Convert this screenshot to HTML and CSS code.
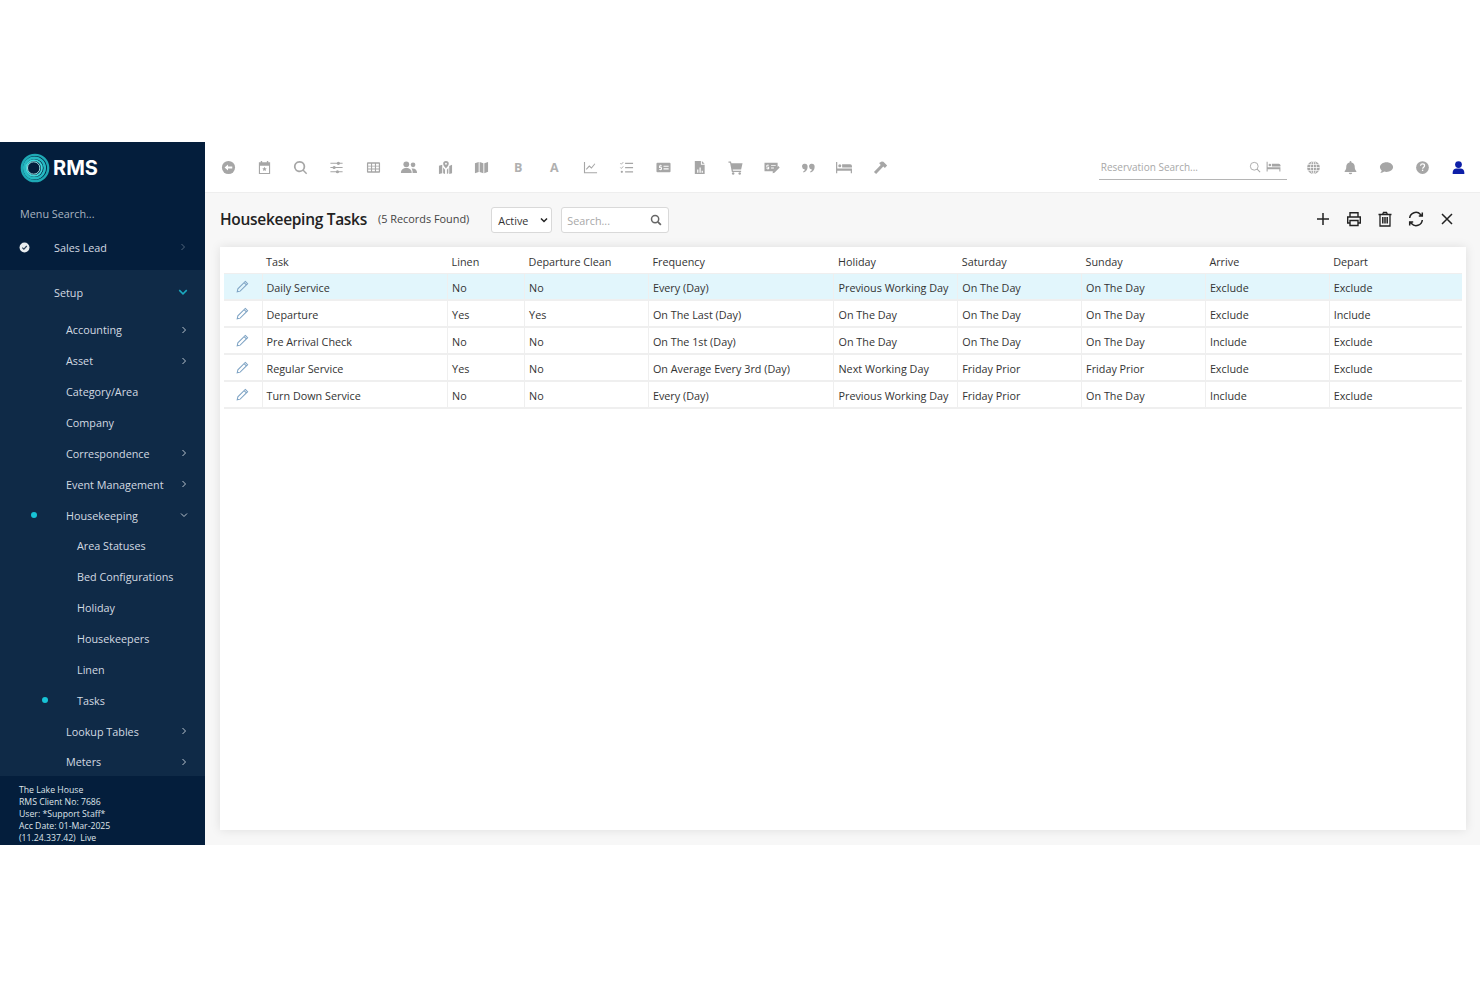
FILE: index.html
```html
<!DOCTYPE html>
<html lang="en">
	<head>
		<meta charset="UTF-8" />
		<title>Housekeeping Tasks</title>
		<link rel="stylesheet" href="styles.css">
	</head>
	<body>
		<div class="app">
			<aside class="sidebar">
				<div class="logo">
					<svg class="logo-mark" viewBox="0 0 32 32" fill="none">
						<circle cx="16" cy="16" r="14" stroke="#1fa9b5" stroke-width="2.6"/>
						<circle cx="15.5" cy="16" r="11" stroke="#25b9c2" stroke-width="2.6"/>
						<circle cx="15" cy="16" r="8.4" stroke="#3fd6da" stroke-width="2"/>
						<circle cx="14.600" cy="16" r="6.600" stroke="#a6eef0" stroke-width="1"/>
					</svg>
					<span class="logo-text">RMS</span>
				</div>
				<div class="menu-search">Menu Search...</div>
				<div class="menu-top">
					<svg class="check" viewBox="0 0 12 12"><circle cx="6" cy="6" r="5.400" fill="#e9edf0"/><path d="M3.600 6.200l1.700 1.600 3.200-3.400" fill="none" stroke="#2b3f55" stroke-width="1.300"/></svg>
					<span>Sales Lead</span>
					<svg class="chev dim" viewBox="0 0 8 8"><path d="M2.500 1l3 3-3 3" fill="none" stroke="currentColor" stroke-width="1"/></svg>
				</div>
				<nav class="menu">
					<div class="menu-setup">
						<span>Setup</span>
						<svg class="chev teal" viewBox="0 0 8 8"><path d="M1 2.500l3 3 3-3" fill="none" stroke="currentColor" stroke-width="1.200"/></svg>
					</div>
					<div class="item">Accounting<svg class="chev" viewBox="0 0 8 8"><path d="M2.500 1l3 3-3 3" fill="none" stroke="currentColor" stroke-width="1"/></svg></div>
					<div class="item">Asset<svg class="chev" viewBox="0 0 8 8"><path d="M2.500 1l3 3-3 3" fill="none" stroke="currentColor" stroke-width="1"/></svg></div>
					<div class="item">Category/Area</div>
					<div class="item">Company</div>
					<div class="item">Correspondence<svg class="chev" viewBox="0 0 8 8"><path d="M2.500 1l3 3-3 3" fill="none" stroke="currentColor" stroke-width="1"/></svg></div>
					<div class="item">Event Management<svg class="chev" viewBox="0 0 8 8"><path d="M2.500 1l3 3-3 3" fill="none" stroke="currentColor" stroke-width="1"/></svg></div>
					<div class="item">
						<i class="dot dot-l1"></i>Housekeeping<svg class="chev" viewBox="0 0 8 8"><path d="M1 2.500l3 3 3-3" fill="none" stroke="currentColor" stroke-width="1"/></svg>
					</div>
					<div class="item sub">Area Statuses</div>
					<div class="item sub">Bed Configurations</div>
					<div class="item sub">Holiday</div>
					<div class="item sub">Housekeepers</div>
					<div class="item sub">Linen</div>
					<div class="item sub"><i class="dot dot-l2"></i>Tasks</div>
					<div class="item">Lookup Tables<svg class="chev" viewBox="0 0 8 8"><path d="M2.500 1l3 3-3 3" fill="none" stroke="currentColor" stroke-width="1"/></svg></div>
					<div class="item">Meters<svg class="chev" viewBox="0 0 8 8"><path d="M2.500 1l3 3-3 3" fill="none" stroke="currentColor" stroke-width="1"/></svg></div>
				</nav>
				<div class="site-info">
					<div>The Lake House</div>
					<div>RMS Client No: 7686</div>
					<div>User: *Support Staff*</div>
					<div>Acc Date: 01-Mar-2025</div>
					<div>(11.24.337.42)&nbsp; Live</div>
				</div>
			</aside>
			<main class="main">
				<header class="topbar">
					<div class="tools">
						<span class="tool"><svg viewBox="0 0 16 16"><circle cx="8" cy="8" r="7"/><path d="M3.800 8l3.700-3.200v2.200H12v2H7.500v2.200z" fill="#fff"/></svg></span>
						<span class="tool"><svg viewBox="0 0 16 16"><path fill-rule="evenodd" d="M4 1h1.500v1.500h5V1H12v1.500h2V15H2V2.500h2zM3.200 6v7.800h9.600V6z"/><path d="M8 7.300l.8 1.500 1.600.2-1.200 1.100.3 1.600L8 11l-1.500.7.300-1.600L5.600 9l1.600-.2z"/></svg></span>
						<span class="tool"><svg viewBox="0 0 16 16"><path fill-rule="evenodd" d="M7 1a6 6 0 0 1 4.700 9.700l3.400 3.400-1.100 1.100-3.400-3.400A6 6 0 1 1 7 1zm0 1.800a4.200 4.200 0 1 0 0 8.400 4.200 4.200 0 0 0 0-8.400z"/></svg></span>
						<span class="tool"><svg viewBox="0 0 16 16"><path d="M1.500 3h13v1h-13zM1.500 7.500h13v1h-13zM1.500 12h13v1h-13z"/><circle cx="10" cy="3.500" r="1.700"/><circle cx="5.500" cy="8" r="1.700"/><circle cx="9" cy="12.500" r="1.700"/></svg></span>
						<span class="tool"><svg viewBox="0 0 16 16"><path fill-rule="evenodd" d="M2 2.500h12a1 1 0 0 1 1 1v9a1 1 0 0 1-1 1H2a1 1 0 0 1-1-1v-9a1 1 0 0 1 1-1zM2.300 4v2h3V4zm4.200 0v2h3V4zm4.200 0v2h3V4zM2.300 7v2h3V7zm4.200 0v2h3V7zm4.200 0v2h3V7zM2.300 10v2h3v-2zm4.200 0v2h3v-2zm4.200 0v2h3v-2z"/></svg></span>
						<span class="tool wide"><svg viewBox="0 0 20 16"><circle cx="7" cy="4.500" r="3.200"/><circle cx="14.500" cy="5" r="2.600"/><path d="M1 14c0-3.600 2.500-5.500 6-5.500s6 1.900 6 5.500z"/><path d="M14 14h5c0-3-1.700-5-4.800-5-.5 0-1 .1-1.400.2 1 1.200 1.200 3 1.200 4.800z"/></svg></span>
						<span class="tool"><svg viewBox="0 0 16 16"><path fill-rule="evenodd" d="M8.500 1a3 3 0 0 1 3 3c0 1.600-1.700 3.500-3 5-1.300-1.500-3-3.400-3-5a3 3 0 0 1 3-3zm0 2a1 1 0 1 0 0 2 1 1 0 0 0 0-2z"/><path d="M1 6l3.500-1v9L1 15zM5.500 8l2 2.500V15l-2-1zM9.500 10.500L11 8.500V14l-1.500 1zM12 6.500l3-1.500v9l-3 1z"/></svg></span>
						<span class="tool"><svg viewBox="0 0 16 16"><path d="M1 3.500l4-1.300v10.500L1 14zM6 2.200l4 1.300v10.500l-4-1.300zM11 3.500l4-1.500v10.500L11 14z"/></svg></span>
						<span class="tool tool-text">B</span>
						<span class="tool tool-text">A</span>
						<span class="tool"><svg viewBox="0 0 16 16"><path d="M1 2h1.200v11H15v1.200H1z"/><path d="M3.500 10l3.200-3.500 2.300 2 3.700-4.500" fill="none" stroke="#a6a6a6" stroke-width="1.100"/></svg></span>
						<span class="tool"><svg viewBox="0 0 16 16"><path d="M6.500 3h8.500v1.200H6.500zM6.500 7.500h8.500v1.200H6.500zM6.500 12h8.500v1.200H6.500z"/><path d="M1.500 3.500l1 1 2-2.200M1.500 8l1 1 2-2.200" fill="none" stroke="#a6a6a6" stroke-width="1"/><circle cx="3" cy="12.600" r="1.200"/></svg></span>
						<span class="tool"><svg viewBox="0 0 16 16"><path fill-rule="evenodd" d="M1.500 3h13a1 1 0 0 1 1 1v8a1 1 0 0 1-1 1h-13a1 1 0 0 1-1-1V4a1 1 0 0 1 1-1zM8 6v1.200h5.500V6zm0 2.800V10h5.500V8.800zM4.600 5v.8H3.300v2.700h1.800v1H3.300v.8h1.300v.7h.8v-.7h1V7.600H4.600v-1h1.800v-.8h-1V5z"/></svg></span>
						<span class="tool"><svg viewBox="0 0 16 16"><path fill-rule="evenodd" d="M3 1h6.500v4H13.500v10H3zM5.500 10v3.500h1.300V10zm2.500-2v5.500h1.300V8zm2.300 3.500v2h1.300v-2z"/><path d="M10.500 1l3 3h-3z"/></svg></span>
						<span class="tool"><svg viewBox="0 0 16 16"><path d="M.5 1.500h2.700l.4 2H15.500l-1.500 6.500H5l.3 1.500H14v1.300H4.100L2.200 2.800H.5z"/><circle cx="5.500" cy="14.300" r="1.300"/><circle cx="12.500" cy="14.300" r="1.300"/></svg></span>
						<span class="tool wide"><svg viewBox="0 0 18 16"><path fill-rule="evenodd" d="M1 3h14v4.500l-4.500 4.500H1zM8 5.500v1h5v-1zm0 2.500v1h3V8zM4.300 4.500v.8H3v2.700h1.800v.9H3v.8h1.300v.7h.8v-.7h.9V7.200H3.800v-1h1.700v-.9h-.4v-.8z"/><path d="M15.700 6.500l1.500 1.500-5.600 5.600-2 .5.500-2z"/></svg></span>
						<span class="tool"><svg viewBox="0 0 16 16"><path d="M7 6.200a3 3 0 1 0-2.900 3.800c-.1 1-.8 1.800-2 2.300l.6 1.100C5.300 12.400 7 10.500 7 7.800zM14.500 6.200a3 3 0 1 0-2.900 3.800c-.1 1-.8 1.800-2 2.300l.6 1.100c2.600-1 4.300-2.900 4.300-5.600z"/></svg></span>
						<span class="tool wide"><svg viewBox="0 0 18 16"><path d="M.5 2h1.300v7H17.500v5h-1.300v-2.500H1.800V14H.5z"/><circle cx="4.500" cy="6.200" r="1.600"/><path d="M7 4.500h8.500a2 2 0 0 1 2 2V8H7z"/></svg></span>
						<span class="tool"><svg viewBox="0 0 16 16"><path d="M6.500 3.200l2.800-1.700 1.800.3 4 4-2.400 2.700-1.700-1.500L3.300 15l-2.300-2.200 7.200-7.600z"/></svg></span>
					</div>
					<div class="res-search">
						<span class="res-label">Reservation Search...</span>
						<svg class="res-glass" viewBox="0 0 16 16"><circle cx="7" cy="7" r="5.200" fill="none" stroke="#a6a6a6" stroke-width="1.200"/><path d="M10.800 10.800l4 4" stroke="#a6a6a6" stroke-width="1.400"/></svg>
						<svg class="res-bed" viewBox="0 0 18 16"><path fill="#a6a6a6" d="M.5 2h1.300v7H17.500v5h-1.300v-2.500H1.800V14H.5z"/><circle fill="#a6a6a6" cx="4.500" cy="6.200" r="1.600"/><path fill="#a6a6a6" d="M7 4.500h8.500a2 2 0 0 1 2 2V8H7z"/></svg>
					</div>
					<div class="tools-right">
						<span class="tool"><svg viewBox="0 0 16 16"><circle cx="8" cy="8" r="6.800"/><path d="M8 1.200v13.600M1.200 8h13.600M2.200 4.700h11.600M2.200 11.300h11.600" stroke="#fff" stroke-width=".8"/><ellipse cx="8" cy="8" rx="3.200" ry="6.800" fill="none" stroke="#fff" stroke-width=".8"/></svg></span>
						<span class="tool"><svg viewBox="0 0 16 16"><path d="M8 1c.6 0 1 .4 1 1v.6c2.400.5 3.500 2.300 3.500 4.400 0 2.800.6 3.700 1.700 4.800v.9H1.800v-.9C2.900 10.700 3.500 9.800 3.500 7c0-2.100 1.100-3.900 3.500-4.400V2c0-.6.400-1 1-1z"/><path d="M6.200 13.500h3.600a1.800 1.800 0 0 1-3.600 0z"/></svg></span>
						<span class="tool"><svg viewBox="0 0 16 16"><path d="M8 2.300c3.900 0 7 2.300 7 5.200s-3.100 5.200-7 5.200c-.9 0-1.700-.1-2.500-.4C4.500 13 3 13.800 1.300 13.800c.8-.8 1.400-1.800 1.600-2.700C1.700 10.100 1 8.900 1 7.500c0-2.900 3.100-5.200 7-5.200z"/></svg></span>
						<span class="tool"><svg viewBox="0 0 16 16"><circle cx="8" cy="8" r="6.800"/><path d="M5.900 6.200c.1-1.300 1-2 2.200-2 1.200 0 2.100.8 2.100 1.900 0 1.700-2 1.700-2 3.200" fill="none" stroke="#fff" stroke-width="1.300"/><rect x="7.400" y="10.300" width="1.400" height="1.400" fill="#fff"/></svg></span>
						<span class="tool user"><svg viewBox="0 0 16 16"><circle cx="8" cy="4.800" r="3.600"/><path d="M1.800 15v-1.800c0-2.500 1.900-4.200 4-4.200h4.400c2.100 0 4 1.700 4 4.200V15z"/></svg></span>
					</div>
				</header>
				<section class="content">
					<div class="title-row">
						<h1>Housekeeping Tasks</h1>
						<span class="count">(5 Records Found)</span>
						<div class="select-box">
							<span>Active</span>
							<svg viewBox="0 0 8 8"><path d="M1 2.500l3 3 3-3" fill="none" stroke="#222" stroke-width="1.500"/></svg>
						</div>
						<div class="search-box">
							<span>Search...</span>
							<svg viewBox="0 0 16 16"><circle cx="6.800" cy="6.800" r="4.800" fill="none" stroke="#666" stroke-width="2"/><path d="M10.500 10.500l4 4" stroke="#666" stroke-width="2.400"/></svg>
						</div>
						<div class="actions">
							<svg viewBox="0 0 16 16"><path d="M8 2v12M2 8h12" fill="none" stroke="#222" stroke-width="1.500"/></svg>
							<svg viewBox="0 0 16 16" fill="none" stroke="#222" stroke-width="1.400"><path d="M4 6V1.700h8V6M4 12H1.700V6h12.600v6H12"/><path d="M4 9.500h8v5H4z"/></svg>
							<svg viewBox="0 0 16 16" fill="none" stroke="#222" stroke-width="1.300"><path d="M1.500 3.500h13M5.500 3.500l1-2h3l1 2M3 3.500V15h10V3.500"/><path d="M5.800 6v6.500M8 6v6.500M10.200 6v6.500" stroke-width="1.500"/></svg>
							<svg viewBox="0 0 16 16" fill="none" stroke="#222" stroke-width="1.500"><path d="M1.700 7A6.200 6.200 0 0 1 12.500 3.500L14.300 5M14.300 1.500V5h-3.500M14.300 9A6.200 6.200 0 0 1 3.500 12.500L1.700 11M1.700 14.500V11h3.500"/></svg>
							<svg viewBox="0 0 16 16"><path d="M3 3l10 10M13 3L3 13" fill="none" stroke="#222" stroke-width="1.500"/></svg>
						</div>
					</div>
					<div class="panel">
						<table class="grid">
							<colgroup>
								<col class="c-edit"><col class="c-task"><col class="c-linen"><col class="c-dep"><col class="c-freq"><col class="c-std"><col class="c-std"><col class="c-std"><col class="c-std"><col>
							</colgroup>
							<thead>
								<tr><th></th><th>Task</th><th>Linen</th><th>Departure Clean</th><th>Frequency</th><th>Holiday</th><th>Saturday</th><th>Sunday</th><th>Arrive</th><th>Depart</th></tr>
							</thead>
							<tbody>
								<tr class="selected"><td class="edit"><svg viewBox="0 0 14 14"><path d="M10 1.500l2.500 2.500-8 8-3.200.7.700-3.200zM8.700 2.800l2.500 2.500" fill="none" stroke="#7ea3c4" stroke-width="1.100"/></svg></td><td>Daily Service</td><td>No</td><td>No</td><td>Every (Day)</td><td>Previous Working Day</td><td>On The Day</td><td>On The Day</td><td>Exclude</td><td>Exclude</td></tr>
								<tr><td class="edit"><svg viewBox="0 0 14 14"><path d="M10 1.500l2.500 2.500-8 8-3.200.7.700-3.200zM8.700 2.800l2.500 2.500" fill="none" stroke="#7ea3c4" stroke-width="1.100"/></svg></td><td>Departure</td><td>Yes</td><td>Yes</td><td>On The Last (Day)</td><td>On The Day</td><td>On The Day</td><td>On The Day</td><td>Exclude</td><td>Include</td></tr>
								<tr><td class="edit"><svg viewBox="0 0 14 14"><path d="M10 1.500l2.500 2.500-8 8-3.200.7.700-3.200zM8.700 2.800l2.500 2.500" fill="none" stroke="#7ea3c4" stroke-width="1.100"/></svg></td><td>Pre Arrival Check</td><td>No</td><td>No</td><td>On The 1st (Day)</td><td>On The Day</td><td>On The Day</td><td>On The Day</td><td>Include</td><td>Exclude</td></tr>
								<tr><td class="edit"><svg viewBox="0 0 14 14"><path d="M10 1.500l2.500 2.500-8 8-3.200.7.700-3.200zM8.700 2.800l2.500 2.500" fill="none" stroke="#7ea3c4" stroke-width="1.100"/></svg></td><td>Regular Service</td><td>Yes</td><td>No</td><td>On Average Every 3rd (Day)</td><td>Next Working Day</td><td>Friday Prior</td><td>Friday Prior</td><td>Exclude</td><td>Exclude</td></tr>
								<tr><td class="edit"><svg viewBox="0 0 14 14"><path d="M10 1.500l2.500 2.500-8 8-3.200.7.700-3.200zM8.700 2.800l2.500 2.500" fill="none" stroke="#7ea3c4" stroke-width="1.100"/></svg></td><td>Turn Down Service</td><td>No</td><td>No</td><td>Every (Day)</td><td>Previous Working Day</td><td>Friday Prior</td><td>On The Day</td><td>Include</td><td>Exclude</td></tr>
							</tbody>
						</table>
					</div>
				</section>
			</main>
		</div>
	</body>
</html>
```

FILE: styles.css
```css
* {
	box-sizing: border-box;
}
body {
	margin: 0;
	background-color: #fff;
	font-family: "Open Sans", Arial, sans-serif;
	font-size: 10.8px;
	color: #333;
}
.app {
	display: flex;
	height: 703px;
	margin: 142px 0;
	overflow: hidden;
}

/* sidebar */
.sidebar {
	display: flex;
	flex-direction: column;
	flex: 0 0 204.5px;
	background-color: #041e3c;
	color: #d3dae2;
}
.logo {
	display: flex;
	align-items: center;
	height: 51px;
	padding-left: 20px;
}
.logo-mark {
	width: 30px;
	height: 30px;
}
.logo-text {
	margin-left: 3px;
	font-family: Inter, Arial, sans-serif;
	font-size: 20px;
	font-weight: 700;
	color: #fff;
}
.menu-search {
	padding: 13px 0 0 20px;
	height: 36px;
	color: #a9b4c0;
}
.menu-top {
	display: flex;
	align-items: center;
	height: 41px;
	padding: 0 18px 5px 19px;
}
.menu-top span {
	margin-left: 24px;
	flex: 1;
}
.check {
	width: 11px;
	height: 11px;
}
.chev {
	width: 8px;
	height: 8px;
	margin-left: auto;
	color: #b9c3cd;
}
.chev.dim {
	color: #51657b;
}
.chev.teal {
	color: #1ba9bf;
	width: 10px;
	height: 10px;
}
.menu {
	flex: 1;
	overflow: hidden;
	background-color: #0f2a47;
	padding-top: 4px;
}
.menu-setup {
	display: flex;
	align-items: center;
	height: 36px;
	margin-bottom: 4.5px;
	padding: 0 17px 0 54px;
}
.item {
	position: relative;
	display: flex;
	align-items: center;
	height: 30.87px;
	padding: 0 17px 0 66px;
}
.item.sub {
	padding-left: 77px;
}
.dot {
	position: absolute;
	width: 6px;
	height: 6px;
	border-radius: 50%;
	background-color: #17c3d6;
}
.dot-l1 {
	left: 31px;
}
.dot-l2 {
	left: 42px;
}
.site-info {
	flex: 0 0 69px;
	padding: 8px 0 0 19px;
	background-color: #041e3c;
	font-size: 8.7px;
	line-height: 12px;
	color: #dfe4ea;
}

/* top toolbar */
.main {
	flex: 1;
	display: flex;
	flex-direction: column;
	min-width: 0;
}
.topbar {
	display: flex;
	align-items: center;
	flex: 0 0 51px;
	padding: 0 3px 0 5.5px;
	background-color: #fff;
	border-bottom: 1px solid #eeeeee;
}
.tools,
.tools-right {
	display: flex;
	align-items: center;
}
.tool {
	display: flex;
	align-items: center;
	justify-content: center;
	width: 36.25px;
	height: 20px;
}
.tool svg {
	width: 15px;
	height: 15px;
	fill: #a6a6a6;
}
.tool.wide svg {
	width: 18px;
}
.tool-text {
	font-family: "Open Sans", Arial, sans-serif;
	font-size: 12.5px;
	font-weight: 700;
	color: #b0b0b0;
}
.tool.user svg {
	fill: #0d1fa8;
}
.res-search {
	display: flex;
	align-items: center;
	width: 188px;
	height: 26px;
	margin-left: auto;
	margin-right: 9px;
	padding: 0 6px 0 2px;
	border-bottom: 1px solid #b5b5b5;
}
.res-label {
	flex: 1;
	font-size: 10px;
	color: #a8a8a8;
}
.res-glass {
	width: 12px;
	height: 12px;
}
.res-bed {
	width: 15px;
	height: 13px;
	margin-left: 5px;
}

/* content */
.content {
	flex: 1;
	display: flex;
	flex-direction: column;
	min-height: 0;
	padding: 0 14px 15px 15.5px;
	background-color: #f7f7f7;
}
.title-row {
	display: flex;
	align-items: center;
	flex: 0 0 54px;
}
h1 {
	margin: 0 0 3px;
	font-size: 15.5px;
	font-weight: 600;
	color: #222;
	letter-spacing: -0.3px;
}
.count {
	margin: 0 0 3px 11px;
	font-size: 10.9px;
	color: #444;
}
.select-box,
.search-box {
	display: flex;
	align-items: center;
	height: 26px;
	border: 1px solid #d9d9d9;
	border-radius: 3px;
	background-color: #fff;
}
.select-box {
	width: 61px;
	margin-left: 22px;
	padding: 0 3px 0 6px;
	color: #333;
}
.select-box span {
	flex: 1;
}
.select-box svg {
	width: 8px;
	height: 8px;
}
.search-box {
	width: 108px;
	margin-left: 9px;
	padding: 0 6px 0 5px;
	color: #a8a8a8;
}
.search-box span {
	flex: 1;
}
.search-box svg {
	width: 12px;
	height: 12px;
}
.actions {
	display: flex;
	align-items: center;
	gap: 15px;
	margin: 0 11px 3px auto;
}
.actions svg {
	width: 16px;
	height: 16px;
}
.panel {
	flex: 1;
	padding: 3px 4px;
	background-color: #fff;
	box-shadow: 0 0 10px rgba(0, 0, 0, 0.1);
}

/* table */
.grid {
	width: 100%;
	table-layout: fixed;
	border-collapse: collapse;
}
.c-edit {
	width: 38px;
}
.c-task {
	width: 185.6px;
}
.c-linen {
	width: 77px;
}
.c-dep {
	width: 123.8px;
}
.c-freq {
	width: 185.6px;
}
.c-std {
	width: 123.8px;
}
.grid th,
.grid td {
	padding: 0 4px;
	text-align: left;
	white-space: nowrap;
	overflow: hidden;
}
.grid th {
	height: 23px;
	padding-top: 1px;
	font-weight: 500;
	color: #333;
	border-bottom: 1px solid #efefef;
}
.grid td {
	height: 27px;
	padding-top: 2px;
	border-bottom: 2px solid #efefef;
	border-left: 1px solid #efefef;
}
.grid td:first-child {
	border-left: 0;
}
.selected td {
	background-color: #e2f6fc;
}
.grid .edit {
	padding: 0;
	text-align: center;
}
.edit svg {
	display: block;
	width: 13px;
	height: 13px;
	margin: 0 auto;
}
```
